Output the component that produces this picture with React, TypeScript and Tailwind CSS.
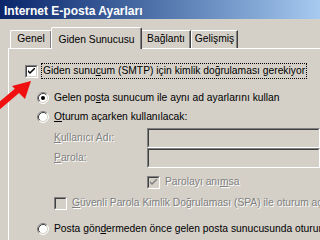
import React from "react";

function CheckBox({ checked, disabled }: { checked?: boolean; disabled?: boolean }) {
  return (
    <div className="w-[13px] h-[13px] shrink-0 border border-t-[#808080] border-l-[#808080] border-b-white border-r-white">
      <div
        className={`w-full h-full border border-t-[#404040] border-l-[#404040] border-b-[#d4d0c8] border-r-[#d4d0c8] flex items-center justify-center ${
          disabled ? "bg-[#d4d0c8]" : "bg-white"
        }`}
      >
        {checked && (
          <svg width="7" height="7" viewBox="0 0 7 7">
            <path
              d="M0 2 L0 4 L2 6 L7 1 L7 -1 L2 4 Z"
              fill={disabled ? "#808080" : "#000"}
            />
          </svg>
        )}
      </div>
    </div>
  );
}

function Radio({ checked }: { checked?: boolean }) {
  return (
    <svg width="12" height="12" viewBox="0 0 12 12" className="shrink-0">
      <circle cx="6" cy="6" r="5" fill="#fff" />
      <path d="M2.11 9.89 A5.5 5.5 0 0 1 9.89 2.11" stroke="#808080" fill="none" />
      <path d="M2.82 9.18 A4.5 4.5 0 0 1 9.18 2.82" stroke="#404040" fill="none" />
      <path d="M9.89 2.11 A5.5 5.5 0 0 1 2.11 9.89" stroke="#fff" fill="none" />
      <path d="M9.18 2.82 A4.5 4.5 0 0 1 2.82 9.18" stroke="#d4d0c8" fill="none" />
      {checked && <circle cx="6" cy="6" r="2" fill="#000" />}
    </svg>
  );
}

function TextBox() {
  return (
    <div className="flex-1 h-full border border-t-[#808080] border-l-[#808080] border-b-white border-r-white">
      <div className="w-full h-full border border-t-[#404040] border-l-[#404040] border-b-[#d4d0c8] border-r-[#d4d0c8] bg-[#d4d0c8]" />
    </div>
  );
}

const grey = "text-[#808080] [text-shadow:1px_1px_0_#fff]";

export default function App() {
  return (
    <div className="relative w-[320px] h-[240px] overflow-hidden bg-[#d4d0c8] flex flex-col font-['Liberation_Sans',Arial,sans-serif] text-[10.3px] text-black">
      {/* TITLE BAR */}
      <div className="h-[19px] shrink-0 flex items-center pl-[4px] bg-gradient-to-r from-[#0a246a] to-[#a6caf0]">
        <span className="text-white font-bold text-[12px] leading-none pt-[2px]">
          Internet E-posta Ayarları
        </span>
      </div>

      {/* TABS */}
      <div className="mt-[8px] h-[21px] shrink-0 flex items-end pl-[10px]">
        <div className="w-[41px] h-[18px] flex items-center justify-center border-t border-l border-white rounded-tl-[2px] shadow-[inset_-1px_0_0_#808080] pb-[1px]">
          Genel
        </div>
        <div className="relative z-10 w-[91px] h-[22px] -mb-[1px] bg-[#d4d0c8] flex items-start justify-center pt-[4px] border-t border-l border-r border-t-white border-l-white border-r-[#404040] rounded-t-[2px] shadow-[inset_-1px_0_0_#808080]">
          Giden Sunucusu
        </div>
        <div className="w-[49px] h-[18px] flex items-center justify-center border-t border-white border-r border-r-[#404040] shadow-[inset_-1px_0_0_#808080] pb-[1px]">
          Bağlantı
        </div>
        <div className="w-[47px] h-[18px] flex items-center justify-center border-t border-l border-white border-r border-r-[#404040] rounded-tl-[2px] shadow-[inset_-1px_0_0_#808080] pb-[1px]">
          Gelişmiş
        </div>
      </div>

      {/* PANEL */}
      <div className="relative flex-1 ml-[8px] border-t border-l border-white pt-[12px] pl-[16px] flex flex-col">
        <div className="h-[20px] flex items-center gap-[3px]">
          <CheckBox checked />
          <span className="border border-dotted border-black px-[1px] leading-[14px] whitespace-nowrap">
            Giden sunu<span className="underline">c</span>um (SMTP) için kimlik doğrulaması gerekiyor
          </span>
        </div>

        <div className="mt-[7px] h-[19px] flex items-center gap-[5px] pl-[12px]">
          <Radio checked />
          <span className="whitespace-nowrap">
            Gelen po<span className="underline">s</span>ta sunucum ile aynı ad ayarlarını kullan
          </span>
        </div>

        <div className="h-[19px] flex items-center gap-[5px] pl-[12px]">
          <Radio />
          <span className="whitespace-nowrap">
            <span className="underline">O</span>turum açarken kullanılacak:
          </span>
        </div>

        <div className="mt-[2px] h-[20px] flex items-center pl-[29px]">
          <span className={`w-[93px] whitespace-nowrap ${grey}`}>
            <span className="underline">K</span>ullanıcı Adı:
          </span>
          <TextBox />
        </div>

        <div className="h-[20px] flex items-center pl-[29px]">
          <span className={`w-[93px] whitespace-nowrap ${grey}`}>
            <span className="underline">P</span>arola:
          </span>
          <TextBox />
        </div>

        <div className="mt-[4px] h-[20px] flex items-center gap-[5px] pl-[122px]">
          <CheckBox checked disabled />
          <span className={`whitespace-nowrap ${grey}`}>
            Parolayı anı<span className="underline">m</span>sa
          </span>
        </div>

        <div className="mt-[1px] h-[20px] flex items-center gap-[5px] pl-[29px]">
          <CheckBox disabled />
          <span className={`whitespace-nowrap ${grey}`}>
            <span className="underline">G</span>üvenli Parola Kimlik Doğrulaması (SPA) ile oturum aç
          </span>
        </div>

        <div className="mt-[6px] h-[20px] flex items-center gap-[5px] pl-[12px]">
          <Radio />
          <span className="whitespace-nowrap">
            Posta gön<span className="underline">d</span>ermeden önce gelen posta sunucusunda oturum aç
          </span>
        </div>
      </div>

      {/* RED ARROW */}
      <svg className="absolute left-0 top-[78px]" width="36" height="34" viewBox="0 0 36 34">
        <path d="M-2 29 L18 12" stroke="#f01010" strokeWidth="6" strokeLinecap="butt" />
        <path d="M31 3 L12 8 L25 21 Z" fill="#f01010" />
      </svg>
    </div>
  );
}
